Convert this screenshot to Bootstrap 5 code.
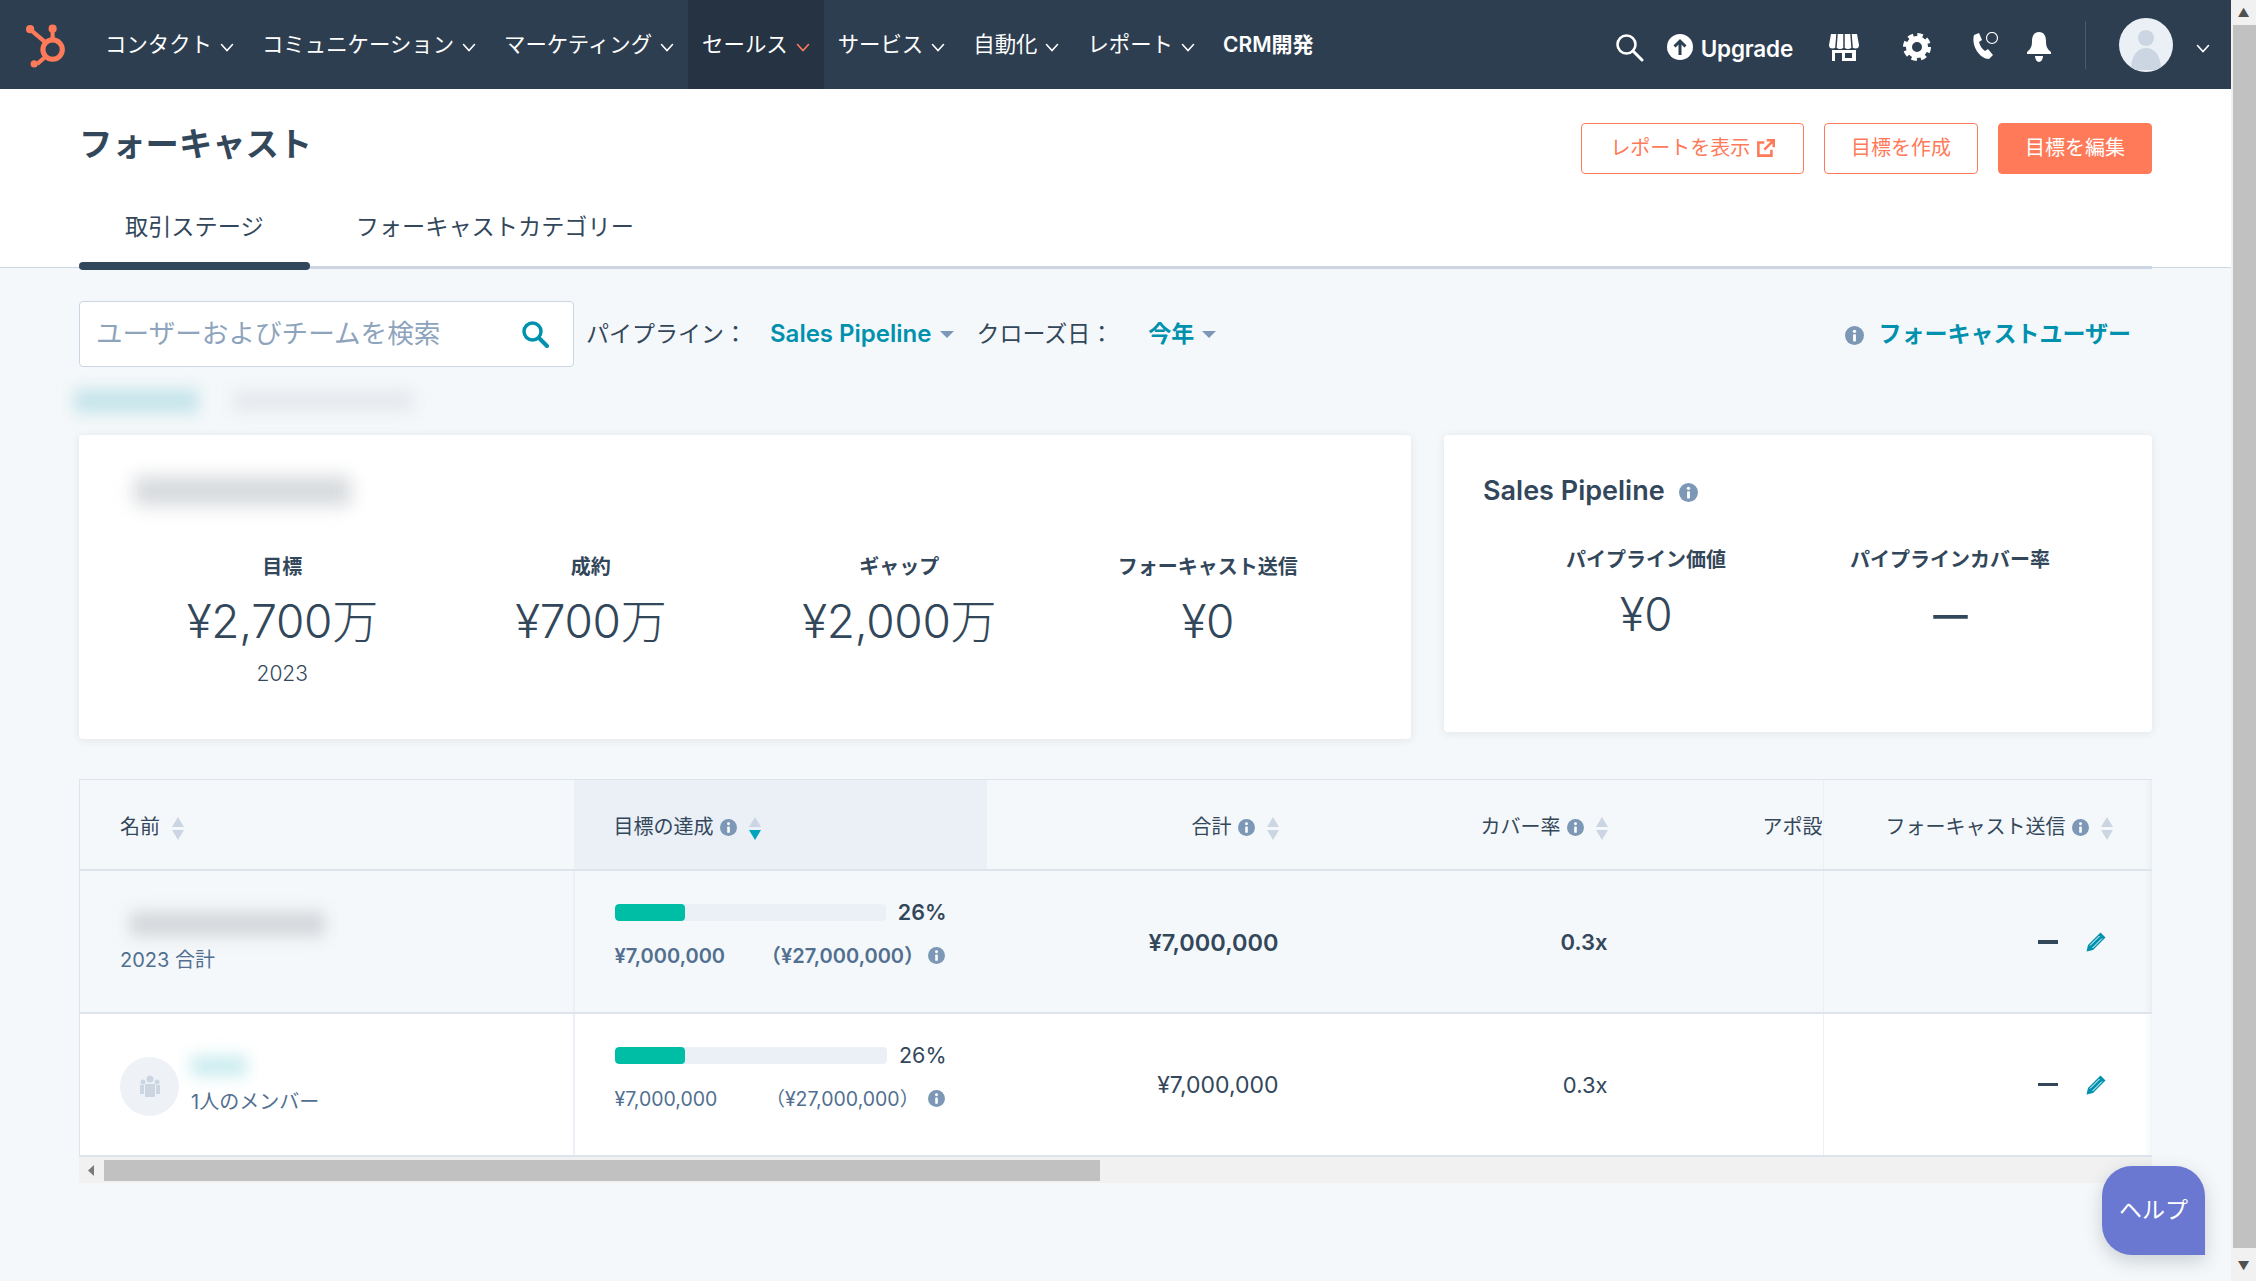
<!DOCTYPE html>
<html lang="ja">
<head>
<meta charset="utf-8">
<title>フォーキャスト</title>
<link href="https://cdn.jsdelivr.net/npm/bootstrap@5.3.0/dist/css/bootstrap.min.css" rel="stylesheet">
<style>
html,body{height:100%;overflow:hidden;}
body{font-family:Inter,"Noto Sans CJK JP",sans-serif;color:#33475b;background:#f5f8fa;font-size:20px;}
.fc-shell{height:1281px;}
.fc-main{width:2231px;flex:none;position:relative;overflow:hidden;}
.fc-vbar{width:25px;flex:none;background:#f1f1f1;}
.fc-vbar .fc-thumb{flex:1;background:#c1c1c1;margin:0 0 0 2px;}
.fc-arrow{height:25px;color:#505050;font-size:12px;line-height:25px;text-align:center;}
.fc-nav{height:89px;background:#2d3e50;padding:0;flex-wrap:nowrap;color:#fff;}
.fc-logo{width:91px;height:89px;padding:2px 0 0 3px;}
.fc-item{height:89px;padding:0 14px 0 14px;font-size:21.4px;color:#fff;text-decoration:none;gap:8px;line-height:89px;white-space:nowrap;}
.fc-item.fc-active{background:#253342;}
.fc-item b{font-weight:600;font-size:21px;}
.fc-chev{width:14px;height:9px;margin-top:5px;}
.fc-tools{margin-left:auto;position:relative;}
.fc-tools>svg,.fc-upg{margin-top:5px;}
.fc-upg{font-weight:600;font-size:22.5px;letter-spacing:-.2px;}
.fc-upg span{margin-top:4px;}
.fc-divider{width:1px;height:48px;background:#425b76;}
.fc-avatar{width:54px;height:54px;border-radius:50%;background:#eaf0f6;overflow:hidden;}
.fc-head{background:#fff;height:179px;border-bottom:1px solid #cbd6e2;padding:34px 79px 0;position:relative;}
.fc-title{font-size:33.3px;font-weight:700;line-height:44px;margin:-1px 0 0;padding-top:0;}
.fc-btn{height:51px;font-size:20px;border-radius:4px;padding:0 26px;line-height:49px;border:1px solid #ff7a59;color:#ff7a59;background:#fff;}
.fc-btn.fc-solid{background:#ff7a59;color:#fff;}
.fc-btns{gap:20px;}
.fc-btn.fc-wide{padding:0 28px;}
.fc-tabline{position:absolute;left:79px;right:79px;bottom:-2px;height:3px;background:#cbd6e2;}
.fc-tabs{position:absolute;left:79px;bottom:-3px;gap:0;}
.fc-tab{padding:3px 46px 0;font-size:23.2px;color:#33475b;text-decoration:none;line-height:34px;height:63px;position:relative;}
.fc-tab.fc-on::after{content:"";position:absolute;left:0;right:0;bottom:0;height:8px;border-radius:4px;background:#33475b;}
.fc-body{padding:33px 79px 0;}
.fc-search{width:495px;height:66px;background:#fff;border:1px solid #cbd6e2;border-radius:4px;padding:0 24px 0 16px;color:#8ea4bc;font-size:26.6px;white-space:nowrap;}
.fc-filter{height:66px;gap:0;font-size:23px;}
.fc-link{color:#0091ae;font-weight:600;text-decoration:none;}
.fc-caret{width:0;height:0;border-left:7px solid transparent;border-right:7px solid transparent;border-top:7px solid #7c98b6;display:inline-block;vertical-align:middle;}
.fc-blurs{height:35px;margin:16px 0 17px -5px;}
.fc-bl{display:block;filter:blur(8px);}
.fc-bl1{width:125px;height:24px;background:#c4e4ea;margin-top:6px;}
.fc-bl2{width:180px;height:20px;background:#e4e8ec;margin:8px 0 0 34px;}
.fc-panel{background:#fff;border:0;border-radius:4px;box-shadow:0 1px 8px rgba(45,62,80,.1);}
.fc-p1{width:1332px;height:304px;padding:0 49px;}
.fc-p2{width:708px;height:297px;margin-left:33px;padding:0 39px;}
.fc-blurT{width:217px;height:30px;margin:41px 0 0 6px;background:#d7dadd;filter:blur(9px);}
.fc-sum{font-size:20px;text-align:center;}
.fc-sum h6{font-size:20px;font-weight:700;margin:0;line-height:30px;color:#33475b;}
.fc-sum .fc-val{font-size:46px;font-weight:300;line-height:60px;letter-spacing:-.3px;margin-top:9px;}
.fc-wdash{display:inline-block;transform:scaleX(1.5);font-weight:400;}
.fc-year{font-size:21px;line-height:36px;font-weight:300;margin-top:5px;}
.fc-s1{width:309px;}
.fc-p2title{font-size:27px;font-weight:600;line-height:36px;padding-top:38px;}
.fc-tablewrap{margin-top:40px;width:2073px;overflow:hidden;border-top:1px solid #dfe3eb;}
.fc-grid{table-layout:fixed;width:2073px;margin:0;--bs-table-bg:transparent;--bs-table-color:#33475b;}
.fc-grid td,.fc-grid th{font-weight:400;vertical-align:middle;padding:0;border-bottom:2px solid #dfe3eb;border-top:0;white-space:nowrap;box-shadow:none;}
.fc-grid thead th{height:90px;background:#f5f8fa;font-size:20px;padding-top:5px;}
.fc-grid tbody tr td{height:143px;font-size:23px;}
.fc-grid tbody tr td.fc-fw{font-size:22px;font-weight:600;}
.fc-grid tbody tr td.fc-big{font-size:23.5px;}
.fc-grid tbody tr td.fc-rate{font-size:22px;}
.fc-grid .fc-total td{background:#f5f8fa;}
.fc-grid .fc-plain td{background:#fff;}
.fc-grid .fc-colA{padding-left:40px;border-right:2px solid #eaf0f6;border-left:1px solid #dfe3eb;}
.fc-grid tbody .fc-colA{padding-top:3px;}
.fc-grid thead .fc-colA{border-right:0;}
.fc-grid .fc-colB{padding-left:40px;}
.fc-grid tbody .fc-colB{padding-right:40px;padding-bottom:16px;}
.fc-grid thead .fc-colB{background:#eaf0f6;}
.fc-grid .fc-colR{text-align:right;padding-right:0;}
.fc-grid tbody .fc-colR{padding-top:2px;}
.fc-grid .fc-clip{overflow:hidden;padding-left:155px;}
.fc-grid .fc-colS{border-left:1px solid #eaf0f6;text-align:right;padding-right:40px;box-shadow:inset -10px 0 9px -9px rgba(124,152,182,.2);}
.fc-grid tbody .fc-colS{padding-right:46px;padding-bottom:2px;}
.fc-tb{flex:1;height:17px;background:#eaf0f6;border-radius:4px;overflow:hidden;display:block;}
.fc-tb i{display:block;height:100%;background:#00bda5;border-radius:4px;}
.fc-barrow{gap:12px;}
.fc-pct{font-size:21.5px;}
.fc-amt{font-size:20px;color:#516f90;line-height:30px;margin-top:12px;}
.fc-amt.fc-reg{font-size:19.5px;}
.fc-fw{font-weight:600;}
.fc-sub{font-size:20px;color:#516f90;line-height:28px;}
.fc-hblur{width:195px;height:24px;background:#d3d6da;margin:0 0 10px 10px;}
.fc-tblur{width:56px;height:20px;background:#c9ebee;margin:0 0 12px 15px;}
.fc-circle{width:59px;height:59px;border-radius:50%;background:#eef2f7;margin-right:-3px;}
.fc-hbar{height:26px;width:2073px;background:#f1f1f1;}
.fc-hbar .fc-hthumb{width:996px;height:21px;background:#c1c1c1;margin:3px 0 0 0;}
.fc-hleft{width:25px;padding-left:8px;padding-top:8px;}
.fc-hleft svg{display:block;}
.fc-help{position:absolute;left:2102px;top:1166px;width:103px;height:89px;background:#6a78d1;color:#fff;border-radius:30px 30px 0 30px;font-size:23px;box-shadow:0 6px 18px rgba(45,62,80,.22);}
.fc-dash{display:inline-block;width:20px;height:3px;background:#33475b;vertical-align:middle;margin-right:27px;}
.fc-dash.fc-thick{height:4px;}
.fc-sort{display:inline-flex;flex-direction:column;gap:3px;vertical-align:middle;margin-left:12px;}
.fc-sort i{width:0;height:0;border-left:6px solid transparent;border-right:6px solid transparent;display:block;}
.fc-sort i:first-child{border-bottom:10px solid #cbd6e2;}
.fc-sort i:last-child{border-top:10px solid #cbd6e2;}
.fc-sort.fc-down i:last-child{border-top-color:#00a4bd;}
.fc-info{width:17px;height:17px;vertical-align:-2px;margin-left:6px;}
</style>
</head>
<body>
<svg width="0" height="0" class="position-absolute">
  <symbol id="i-info" viewBox="0 0 16 16"><circle cx="8" cy="8" r="8" fill="#7c98b6"/><rect x="6.8" y="7" width="2.4" height="6" rx=".6" fill="#fff"/><circle cx="8" cy="4.5" r="1.4" fill="#fff"/></symbol>
  <symbol id="i-chev" viewBox="0 0 14 9"><path d="M1.5 1.5 7 7.5l5.5-6" fill="none" stroke="currentColor" stroke-width="1.6" stroke-linecap="round"/></symbol>
  <symbol id="i-pen" viewBox="0 0 22 22"><path d="M15.5 1.5l5 5L8 19l-6.5 1.5L3 14z" fill="#0091ae"/><path d="M5 14.500l9.500-9.500M7.500 17l9.500-9.500" stroke="#fff" stroke-width="1"/></symbol>
</svg>
<div class="d-flex fc-shell">
<div class="fc-main">
  <nav class="navbar fc-nav d-flex align-items-center">
    <div class="fc-logo d-flex align-items-center justify-content-center">
      <svg width="45" height="45" viewBox="0 0 44 44"><g fill="none" stroke="#ff7a59" stroke-width="5"><circle cx="27" cy="26" r="9.5"/><path d="M27 16V7M20 19 7 8M20 33l-8 7" stroke-width="4"/></g><g fill="#ff7a59"><circle cx="27" cy="5.500" r="4"/><circle cx="5" cy="6" r="4"/><circle cx="9" cy="40" r="3.500"/></g></svg>
    </div>
    <a class="fc-item d-flex align-items-center" href="#">コンタクト<svg class="fc-chev"><use href="#i-chev"/></svg></a>
    <a class="fc-item d-flex align-items-center" href="#">コミュニケーション<svg class="fc-chev"><use href="#i-chev"/></svg></a>
    <a class="fc-item d-flex align-items-center" href="#">マーケティング<svg class="fc-chev"><use href="#i-chev"/></svg></a>
    <a class="fc-item fc-active d-flex align-items-center" href="#">セールス<svg class="fc-chev" style="color:#ff7a59"><use href="#i-chev"/></svg></a>
    <a class="fc-item d-flex align-items-center" href="#">サービス<svg class="fc-chev"><use href="#i-chev"/></svg></a>
    <a class="fc-item d-flex align-items-center" href="#">自動化<svg class="fc-chev"><use href="#i-chev"/></svg></a>
    <a class="fc-item d-flex align-items-center" href="#">レポート<svg class="fc-chev"><use href="#i-chev"/></svg></a>
    <a class="fc-item d-flex align-items-center" href="#"><b>CRM開発</b></a>
    <div class="fc-tools d-flex align-items-center">
      <svg width="30" height="30" viewBox="0 0 30 30" style="margin-right:23px"><circle cx="12.500" cy="12.500" r="9" fill="none" stroke="#fff" stroke-width="2.600"/><path d="M19 19l9 9" stroke="#fff" stroke-width="3" stroke-linecap="round"/></svg>
      <div class="d-flex align-items-center fc-upg" style="margin-right:36px"><svg width="26" height="26" viewBox="0 0 26 26" class="me-2"><circle cx="13" cy="13" r="13" fill="#fff"/><path d="M13 21V7M7.500 12.500 13 7l5.500 5.500" fill="none" stroke="#2d3e50" stroke-width="3"/></svg><span>Upgrade</span></div>
      <svg width="30" height="28" viewBox="0 0 30 28" style="margin-right:44px"><path d="M2 1h26l2 11a3.500 3.500 0 0 1-7 0 3.500 3.500 0 0 1-8 0 3.500 3.500 0 0 1-8 0 3.500 3.500 0 0 1-7 0z" fill="#fff"/><path d="M8 1 7 14M15 1v13M22 1l1 13" stroke="#2d3e50" stroke-width="1.500"/><path d="M3 17h24v11H3z" fill="#fff"/><path d="M6 20h7v8H6zM16 20h7v5h-7z" fill="#2d3e50"/></svg>
      <svg width="28" height="28" viewBox="0 0 28 28" style="margin-right:39px"><circle cx="14" cy="14" r="8" fill="none" stroke="#fff" stroke-width="6"/><circle cx="14" cy="14" r="12" fill="none" stroke="#fff" stroke-width="4" stroke-dasharray="5.420 4"/></svg>
      <svg width="30" height="30" viewBox="0 0 30 30" style="margin-right:26px"><path d="M4 3l5-2 3 7-3 2c1 4 3 7 6 9l3-2 5 6-4 4C10 27 1 14 4 3z" fill="#fff"/><circle cx="22" cy="6" r="5.500" fill="none" stroke="#fff" stroke-width="1.200"/></svg>
      <svg width="26" height="30" viewBox="0 0 26 30" style="margin-right:33px"><path d="M13 0c5 0 7 4 7 9 0 5 1 8 5 11v2H1v-2c4-3 5-6 5-11 0-5 2-9 7-9z" fill="#fff"/><path d="M9 24h8c0 3-2 6-4 6s-4-3-4-6z" fill="#fff"/></svg>
      <div class="fc-divider" style="margin-right:33px"></div>
      <div class="fc-avatar" style="margin-right:23px"><svg width="54" height="54" viewBox="0 0 54 54"><circle cx="27" cy="20" r="8" fill="#cbd6e2"/><path d="M12 52c0-14 6-22 15-22s15 8 15 22z" fill="#cbd6e2"/></svg></div>
      <svg class="fc-chev" style="margin-right:21px;margin-top:8px"><use href="#i-chev"/></svg>
    </div>
  </nav>
  <header class="fc-head">
    <div class="d-flex justify-content-between align-items-start">
      <h1 class="fc-title">フォーキャスト</h1>
      <div class="d-flex fc-btns">
        <a class="btn fc-btn fc-wide" href="#">レポートを表示 <svg width="19" height="19" viewBox="0 0 16 16" style="vertical-align:-3px"><path d="M7 3H2v11h11V9" fill="none" stroke="#ff7a59" stroke-width="2.200"/><path d="M7 9l7-7M9 1h6v6" fill="none" stroke="#ff7a59" stroke-width="2.200"/></svg></a>
        <a class="btn fc-btn" href="#">目標を作成</a>
        <a class="btn fc-btn fc-solid" href="#">目標を編集</a>
      </div>
    </div>
    <div class="fc-tabline"></div>
    <div class="fc-tabs d-flex">
      <a class="fc-tab fc-on" href="#">取引ステージ</a>
      <a class="fc-tab" href="#">フォーキャストカテゴリー</a>
    </div>
  </header>
  <main class="fc-body">
    <div class="d-flex fc-filter align-items-center">
      <div class="fc-search d-flex align-items-center justify-content-between"><span>ユーザーおよびチームを検索</span>
        <svg width="28" height="28" viewBox="0 0 28 28"><circle cx="11.500" cy="11.500" r="8.500" fill="none" stroke="#0091ae" stroke-width="3.500"/><path d="M18 18l8 8" stroke="#0091ae" stroke-width="4" stroke-linecap="round"/></svg></div>
      <span style="margin-left:12px">パイプライン：</span>
      <a href="#" class="fc-link" style="margin-left:23px;font-size:24px">Sales Pipeline</a><span class="fc-caret" style="margin:0 22px 0 9px"></span>
      <span>クローズ日：</span>
      <a href="#" class="fc-link" style="margin-left:35px">今年</a><span class="fc-caret ms-2"></span>
      <span class="ms-auto d-flex align-items-center" style="padding-right:21px"><svg class="fc-info" style="width:19px;height:19px;margin:3px 14px 0 0"><use href="#i-info"/></svg><a href="#" class="fc-link" style="font-size:23px">フォーキャストユーザー</a></span>
    </div>
    <div class="fc-blurs d-flex"><span class="fc-bl fc-bl1"></span><span class="fc-bl fc-bl2"></span></div>
    <div class="d-flex align-items-start">
      <section class="fc-panel fc-p1">
        <span class="fc-bl fc-blurT"></span>
        <div class="d-flex fc-sum" style="margin-top:46px">
          <div class="fc-s1"><h6>目標</h6><div class="fc-val">¥2,700万</div><div class="fc-year">2023</div></div>
          <div class="fc-s1"><h6>成約</h6><div class="fc-val">¥700万</div></div>
          <div class="fc-s1"><h6>ギャップ</h6><div class="fc-val">¥2,000万</div></div>
          <div class="fc-s1"><h6>フォーキャスト送信</h6><div class="fc-val">¥0</div></div>
        </div>
      </section>
      <section class="fc-panel fc-p2">
        <div class="fc-p2title">Sales Pipeline <svg class="fc-info" style="width:19px;height:19px;margin-left:8px"><use href="#i-info"/></svg></div>
        <div class="d-flex fc-sum" style="margin-top:36px;padding-left:11px">
          <div style="width:304px;flex:none"><h6>パイプライン価値</h6><div class="fc-val">¥0</div></div>
          <div style="width:304px;flex:none"><h6>パイプラインカバー率</h6><div class="fc-val"><span class="fc-wdash">–</span></div></div>
        </div>
      </section>
    </div>
    <div class="fc-tablewrap">
      <table class="table fc-grid">
        <colgroup><col style="width:494px"><col style="width:413px"><col style="width:292px"><col style="width:329px"><col style="width:216px"><col style="width:329px"></colgroup>
        <thead><tr>
          <th class="fc-colA">名前<span class="fc-sort"><i></i><i></i></span></th>
          <th class="fc-colB">目標の達成<svg class="fc-info"><use href="#i-info"/></svg><span class="fc-sort fc-down"><i></i><i></i></span></th>
          <th class="fc-colR">合計<svg class="fc-info"><use href="#i-info"/></svg><span class="fc-sort"><i></i><i></i></span></th>
          <th class="fc-colR">カバー率<svg class="fc-info"><use href="#i-info"/></svg><span class="fc-sort"><i></i><i></i></span></th>
          <th class="fc-clip">アポ設</th>
          <th class="fc-colS">フォーキャスト送信<svg class="fc-info"><use href="#i-info"/></svg><span class="fc-sort"><i></i><i></i></span></th>
        </tr></thead>
        <tbody>
          <tr class="fc-total">
            <td class="fc-colA"><span class="fc-bl fc-hblur"></span><div class="fc-sub">2023 合計</div></td>
            <td class="fc-colB">
              <div class="d-flex align-items-center fc-barrow fc-fw"><span class="fc-tb"><i style="width:26%"></i></span><span class="fc-pct">26%</span></div>
              <div class="d-flex align-items-center fc-amt fc-fw"><span>¥7,000,000</span><span style="margin-left:36px">（¥27,000,000）</span><svg class="fc-info" style="margin-left:auto;margin-right:2px"><use href="#i-info"/></svg></div>
            </td>
            <td class="fc-colR fc-fw fc-big">¥7,000,000</td>
            <td class="fc-colR fc-fw">0.3x</td>
            <td></td>
            <td class="fc-colS"><span class="fc-dash fc-thick"></span><svg width="22" height="22"><use href="#i-pen"/></svg></td>
          </tr>
          <tr class="fc-plain">
            <td class="fc-colA">
              <div class="d-flex align-items-center">
                <div class="fc-circle d-flex align-items-center justify-content-center"><svg width="24" height="24" viewBox="0 0 24 24" fill="#cbd6e2"><circle cx="12" cy="5" r="3.500"/><circle cx="5" cy="8" r="2.500"/><circle cx="19" cy="8" r="2.500"/><path d="M7 10h10v13H7zM2 11h4v9H2zM18 11h4v9h-4z"/></svg></div>
                <div><span class="fc-bl fc-tblur"></span><div class="fc-sub" style="padding-left:15px">1人のメンバー</div></div>
              </div>
            </td>
            <td class="fc-colB">
              <div class="d-flex align-items-center fc-barrow"><span class="fc-tb"><i style="width:26%"></i></span><span class="fc-pct">26%</span></div>
              <div class="d-flex align-items-center fc-amt fc-reg"><span>¥7,000,000</span><span style="margin-left:48px">（¥27,000,000）</span><svg class="fc-info" style="margin-left:auto;margin-right:2px"><use href="#i-info"/></svg></div>
            </td>
            <td class="fc-colR">¥7,000,000</td>
            <td class="fc-colR fc-rate">0.3x</td>
            <td></td>
            <td class="fc-colS"><span class="fc-dash"></span><svg width="22" height="22"><use href="#i-pen"/></svg></td>
          </tr>
        </tbody>
      </table>
      <div class="fc-hbar d-flex"><div class="fc-hleft"><svg width="8" height="11" viewBox="0 0 8 11"><path d="M7 0v11L1 5.500z" fill="#7a7a7a"/></svg></div><div class="fc-hthumb"></div></div>
    </div>
  </main>
  <button class="btn fc-help d-flex align-items-center justify-content-center" type="button">ヘルプ</button>
</div>
<div class="fc-vbar d-flex flex-column"><div class="fc-arrow">▲</div><div class="fc-thumb"></div><div class="fc-arrow" style="height:33px;line-height:36px">▼</div></div>
</div>
</body>
</html>
